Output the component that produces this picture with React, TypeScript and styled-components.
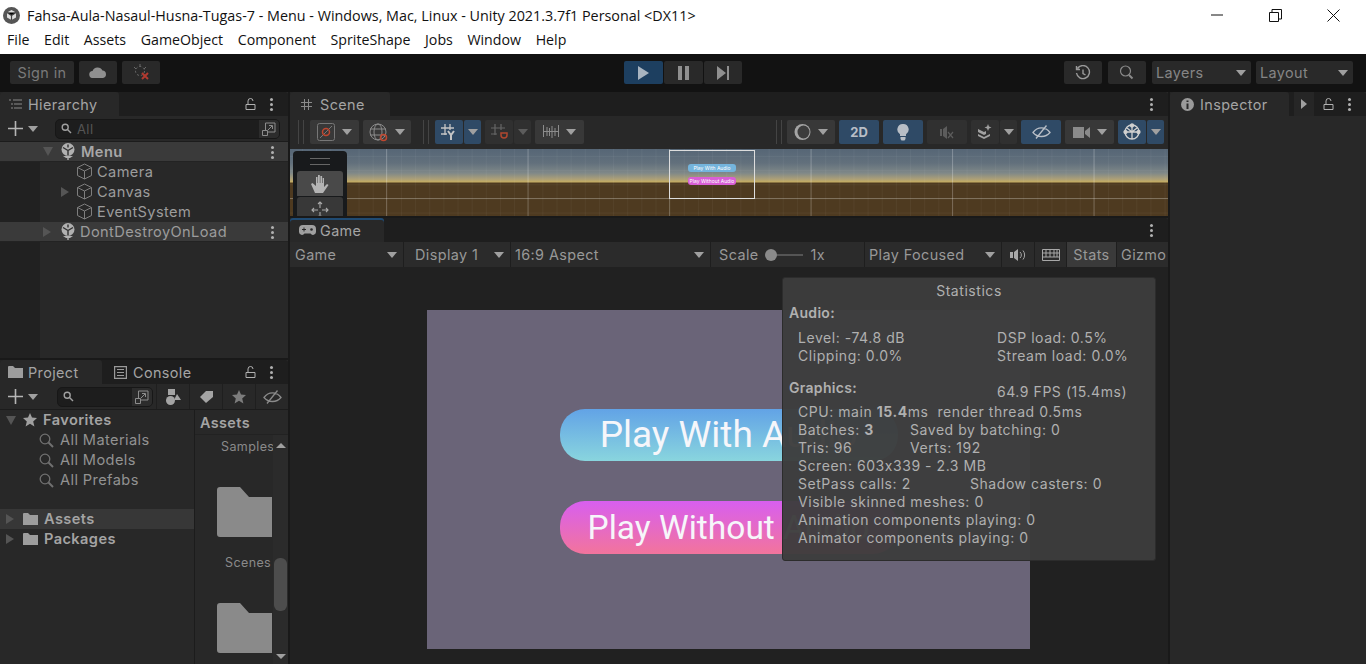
import React from "react";
import styled, { createGlobalStyle } from "styled-components";

const GlobalStyle = createGlobalStyle`
    html, body {
        margin: 0;
        padding: 0;
        background: #191919;
    }
    * {
        box-sizing: border-box;
    }
`;

const Page = styled.div`
    width: 1366px;
    height: 664px;
    overflow: hidden;
    display: flex;
    flex-direction: column;
    font-family: "Inter", "Liberation Sans", sans-serif;
    font-size: 14.4px;
    letter-spacing: 0.4px;
    color: #a4a4a4;
`;

/* window chrome */

const TitleBar = styled.div`
    height: 30px;
    background: #fff;
    display: flex;
    align-items: center;
    padding-left: 3px;
    color: #111;
    font-family: "Open Sans", "Liberation Sans", sans-serif;
    font-size: 14.35px;
    letter-spacing: 0;
`;

const TitleText = styled.span`
    margin-left: 7px;
    flex: 1;
`;

const WinButton = styled.div`
    width: 58px;
    height: 30px;
    display: flex;
    align-items: center;
    justify-content: center;
`;

const WinButtons = styled.div`
    display: flex;
    padding-right: 4px;
`;

const MenuBar = styled.div`
    height: 24px;
    background: #fff;
    display: flex;
    align-items: flex-start;
    gap: 14.6px;
    padding: 0 0 0 7px;
    color: #111;
    font-family: "Open Sans", "Liberation Sans", sans-serif;
    font-size: 14.2px;
    letter-spacing: 0;
`;

/* top toolbar */

const Toolbar = styled.div`
    height: 38px;
    background: #121212;
    padding: 7px 13px 7px 10px;
    display: flex;
`;

const ToolGroup = styled.div<{ $gap?: number; $left?: number }>`
    display: flex;
    gap: ${(p) => p.$gap ?? 0}px;
    margin-left: ${(p) => p.$left ?? 0}px;
`;

const ToolButton = styled.div<{ $w: number; $on?: boolean }>`
    width: ${(p) => p.$w}px;
    height: 23px;
    background: ${(p) => (p.$on ? "#1d3f60" : "#292929")};
    border-radius: 2px;
    display: flex;
    align-items: center;
    justify-content: center;
    color: #7a7a7a;
`;

const ToolDrop = styled(ToolButton)`
    justify-content: space-between;
    padding: 0 5px 0 4px;
    color: #858585;
`;

const Caret = styled.i<{ $dim?: boolean }>`
    display: block;
    width: 0;
    height: 0;
    flex: none;
    border-left: 5px solid transparent;
    border-right: 5px solid transparent;
    border-top: 6px solid ${(p) => (p.$dim ? "#5c5c5c" : "#a0a0a0")};
`;

/* docking layout */

const Dock = styled.div`
    flex: 1;
    display: grid;
    grid-template-columns: 288px 878px 196px;
    gap: 2px;
    background: #191919;
    min-height: 0;
`;

const Column = styled.div`
    display: flex;
    flex-direction: column;
    gap: 2px;
    min-height: 0;
`;

const Panel = styled.section<{ $h?: number }>`
    position: relative;
    background: #282828;
    display: flex;
    flex-direction: column;
    min-height: 0;
    flex: ${(p) => (p.$h ? `0 0 ${p.$h}px` : "1")};
`;

const TabStrip = styled.div`
    height: 24px;
    flex: none;
    background: #1e1e1e;
    display: flex;
    align-items: stretch;
    border-radius: 3px 3px 0 0;
`;

const Tab = styled.div<{ $w: number; $on?: boolean; $accent?: boolean; $pad?: number; $gap?: number }>`
    width: ${(p) => p.$w}px;
    background: ${(p) => (p.$on ? "#282828" : "transparent")};
    box-shadow: ${(p) => (p.$accent ? "inset 0 2px 0 #1f4a72" : "none")};
    border-radius: 3px 3px 0 0;
    display: flex;
    align-items: center;
    gap: ${(p) => p.$gap ?? 5}px;
    padding-left: ${(p) => p.$pad ?? 9}px;
`;

const TabActions = styled.div`
    margin-left: auto;
    display: flex;
    align-items: center;
    gap: 14px;
    padding-right: 15px;
`;

const Dots = styled.i`
    display: block;
    width: 3px;
    height: 3px;
    border-radius: 50%;
    background: #b0b0b0;
    box-shadow: 0 -5px 0 #b0b0b0, 0 5px 0 #b0b0b0;
`;

const DebugArrow = styled.div`
    width: 20px;
    height: 24px;
    margin-right: -5px;
    background: #262626;
    display: flex;
    align-items: center;
    justify-content: center;
    &::before {
        content: "";
        border-top: 5px solid transparent;
        border-bottom: 5px solid transparent;
        border-left: 6px solid #a0a0a0;
    }
`;

/* hierarchy */

const SearchBar = styled.div`
    height: 26px;
    flex: none;
    display: flex;
    align-items: center;
    padding-left: 8px;
    border-bottom: 1px solid #1c1c1c;
`;

const AddButton = styled.div`
    display: flex;
    align-items: center;
    gap: 5px;
`;

const SearchField = styled.div<{ $w: number; $left: number }>`
    width: ${(p) => p.$w}px;
    margin-left: ${(p) => p.$left}px;
    height: 20px;
    background: #1d1d1d;
    border: 1px solid #171717;
    border-radius: 5px;
    display: flex;
    align-items: center;
    padding-left: 5px;
    gap: 5px;
    color: #555;
    font-size: 13px;
    overflow: hidden;
`;

const SearchPop = styled.div`
    margin-left: auto;
    width: 20px;
    height: 100%;
    background: #2c2c2c;
    display: flex;
    align-items: center;
    justify-content: center;
`;

const TreeList = styled.div`
    flex: 1;
    background: linear-gradient(90deg, #212121 40px, #282828 40px);
`;

const TreeRow = styled.div<{ $arrowAt: number; $hi?: boolean; $bold?: boolean }>`
    height: 20px;
    display: flex;
    align-items: center;
    position: relative;
    padding-left: ${(p) => p.$arrowAt}px;
    padding-bottom: ${(p) => (p.$hi ? 0 : 1)}px;
    background: ${(p) => (p.$hi ? "#3a3a3a" : "transparent")};
    border-bottom: ${(p) => (p.$hi ? "1px solid #232323" : "none")};
    font-size: 14.6px;
    letter-spacing: 0.4px;
    font-weight: ${(p) => (p.$bold ? 600 : 400)};
    color: ${(p) => (p.$bold ? "#a8a8a8" : "#9c9c9c")};
`;

const Arrow = styled.span<{ $open?: boolean; $none?: boolean; $w?: number }>`
    width: ${(p) => p.$w ?? 17}px;
    flex: none;
    display: flex;
    &::before {
        content: "";
        display: ${(p) => (p.$none ? "none" : "block")};
        width: 0;
        height: 0;
        ${(p) =>
            p.$open
                ? "border-left: 5px solid transparent; border-right: 5px solid transparent; border-top: 9px solid #555;"
                : "border-top: 5px solid transparent; border-bottom: 5px solid transparent; border-left: 8px solid #555;"}
    }
`;

const RowLabel = styled.span<{ $left?: number }>`
    margin-left: ${(p) => p.$left ?? 4}px;
    white-space: nowrap;
`;

const RowMenu = styled.span`
    position: absolute;
    right: 14px;
    top: 9px;
`;

/* project */

const ProjectBar = styled.div`
    height: 26px;
    flex: none;
    display: flex;
    align-items: center;
    padding-left: 8px;
    border-bottom: 1px solid #1c1c1c;
    overflow: hidden;
`;

const FilterButton = styled.div<{ $left?: number }>`
    width: 33px;
    height: 26px;
    flex: none;
    margin-left: ${(p) => p.$left ?? 0}px;
    border-left: 1px solid #1f1f1f;
    display: flex;
    align-items: center;
    justify-content: center;
`;

const ProjectBody = styled.div`
    flex: 1;
    display: grid;
    grid-template-columns: 195px 1fr;
    min-height: 0;
`;

const ProjectTree = styled.div`
    border-right: 1px solid #1c1c1c;
`;

const ProjectRow = styled.div<{ $indent?: number; $hi?: boolean; $gapTop?: number; $bold?: boolean }>`
    height: 20px;
    display: flex;
    align-items: center;
    padding-left: ${(p) => p.$indent ?? 6}px;
    margin-top: ${(p) => p.$gapTop ?? 0}px;
    background: ${(p) => (p.$hi ? "#373737" : "transparent")};
    font-size: 14.6px;
    letter-spacing: 0.4px;
    font-weight: ${(p) => (p.$bold ? 600 : 400)};
    color: ${(p) => (p.$bold ? "#a4a4a4" : "#929292")};
    gap: 4px;
`;

const ProjectLabel = styled.span`
    margin-left: 2px;
`;

const AssetPane = styled.div`
    display: flex;
    flex-direction: column;
    min-height: 0;
    position: relative;
`;

const AssetHeader = styled.div`
    height: 25px;
    flex: none;
    font-weight: 600;
    padding-left: 5px;
    display: flex;
    align-items: center;
    border-bottom: 1px solid #222;
`;

const AssetGrid = styled.div`
    flex: 1;
    display: flex;
    overflow: hidden;
`;

const AssetList = styled.div`
    width: 78px;
    overflow: hidden;
    display: flex;
    flex-direction: column;
    flex: none;
`;

const AssetName = styled.div<{ $top: number; $pad: number }>`
    margin-top: ${(p) => p.$top}px;
    padding-left: ${(p) => p.$pad}px;
    height: 16px;
    line-height: 16px;
    font-size: 12.5px;
    white-space: nowrap;
    color: #8a8a8a;
`;

const AssetFolder = styled.svg<{ $top: number }>`
    margin: ${(p) => p.$top}px 0 0 22px;
    display: block;
    flex: none;
`;

const ScrollTrack = styled.div`
    width: 15px;
    background: #2b2b2b;
    display: flex;
    flex-direction: column;
    align-items: center;
    padding-top: 8px;
`;

const ScrollUp = styled.i`
    display: block;
    width: 0;
    height: 0;
    border-left: 5px solid transparent;
    border-right: 5px solid transparent;
    border-bottom: 5px solid #a0a0a0;
`;

const ScrollThumb = styled.i`
    display: block;
    width: 13px;
    height: 53px;
    margin-top: 110px;
    background: #4d4d4d;
    border-radius: 6px;
`;

const ScrollDown = styled.i`
    display: block;
    width: 0;
    height: 0;
    margin-top: 43px;
    border-left: 5px solid transparent;
    border-right: 5px solid transparent;
    border-top: 5px solid #a0a0a0;
`;

/* scene */

const SceneBar = styled.div`
    height: 33px;
    flex: none;
    display: flex;
    align-items: flex-start;
    padding-top: 4px;
    background: #282828;
`;

const SceneHandle = styled.i<{ $left: number }>`
    display: block;
    width: 6px;
    height: 24px;
    margin-left: ${(p) => p.$left}px;
    border-left: 1px solid #444;
    border-right: 1px solid #444;
    flex: none;
`;

const SceneButton = styled.div<{ $w: number; $left?: number; $on?: boolean; $dim?: boolean }>`
    width: ${(p) => p.$w}px;
    height: 24px;
    margin-left: ${(p) => p.$left ?? 0}px;
    flex: none;
    background: ${(p) => (p.$on ? "#2f4a66" : p.$dim ? "#303030" : "#383838")};
    border-radius: 2px;
    display: flex;
    align-items: center;
    justify-content: center;
    gap: 7px;
    color: #b8bec6;
    font-size: 13px;
    font-weight: 700;
    letter-spacing: 0;
`;

const SplitButton = styled.div<{ $left?: number }>`
    display: flex;
    gap: 1px;
    flex: none;
    margin-left: ${(p) => p.$left ?? 0}px;
`;

const SceneView = styled.div`
    flex: 1;
    position: relative;
    overflow: hidden;
    background-image:
        linear-gradient(90deg, rgba(255, 255, 255, 0.22) 1px, transparent 1px),
        linear-gradient(rgba(255, 255, 255, 0.26) 1px, transparent 1px),
        linear-gradient(90deg, rgba(255, 255, 255, 0.04) 1px, transparent 1px),
        linear-gradient(rgba(255, 255, 255, 0.04) 1px, transparent 1px),
        linear-gradient(
            #566676 0,
            #62707c 14px,
            #7f8888 24px,
            #ab9f78 30px,
            #c4ac62 33px,
            #4e3a20 34px,
            #4e3a20 100%
        );
    background-size: 141.5px 100%, 100% 141.5px, 14.15px 100%, 100% 14.15px, 100% 100%;
    background-position: 96px 0, 0 49px, 12px 0, 0 7px, 0 0;
`;

const ToolPalette = styled.div`
    position: absolute;
    left: 3px;
    top: 2px;
    width: 54px;
    height: 66px;
    background: #181a1c;
    border-radius: 4px 4px 0 0;
    display: flex;
    flex-direction: column;
    align-items: center;
    padding-top: 7px;
`;

const PaletteGrip = styled.i`
    display: block;
    width: 20px;
    height: 7px;
    border-top: 1px solid #666;
    border-bottom: 1px solid #666;
    margin-bottom: 6px;
    flex: none;
`;

const PaletteButton = styled.div<{ $on?: boolean }>`
    width: 46px;
    height: 25px;
    background: ${(p) => (p.$on ? "#494949" : "#383838")};
    border-radius: 3px 3px 0 0;
    margin-bottom: 1px;
    display: flex;
    align-items: center;
    justify-content: center;
    flex: none;
`;

const CanvasFrame = styled.div`
    position: absolute;
    left: 379px;
    top: 1px;
    width: 86px;
    height: 49px;
    border: 1px solid #ddd;
    display: flex;
    flex-direction: column;
    align-items: center;
    padding-top: 13px;
    gap: 5px;
`;

const MiniPlay = styled.div<{ $pink?: boolean }>`
    width: 48px;
    height: 8px;
    border-radius: 3px;
    background: ${(p) => (p.$pink ? "#d95fd6" : "#74b4dc")};
    color: #fff;
    font-size: 5px;
    line-height: 8px;
    letter-spacing: 0;
    text-align: center;
    white-space: nowrap;
`;

/* game */

const GameBar = styled.div`
    height: 25px;
    flex: none;
    display: flex;
    gap: 1px;
    background: #1e1e1e;
`;

const GameItem = styled.div<{ $w: number; $on?: boolean; $center?: boolean; $pad?: number }>`
    width: ${(p) => p.$w}px;
    flex: none;
    background: ${(p) => (p.$on ? "#3a3a3a" : "#2b2b2b")};
    display: flex;
    align-items: center;
    justify-content: ${(p) => (p.$center ? "center" : "space-between")};
    padding: ${(p) => (p.$center ? "0" : `0 6px 0 ${p.$pad ?? 4}px`)};
    white-space: nowrap;
    overflow: hidden;
    color: #989898;
`;

const ScaleTrack = styled.i`
    display: block;
    width: 36px;
    height: 2px;
    background: #555;
    position: relative;
    margin: 0 8px;
    &::before {
        content: "";
        position: absolute;
        left: -2px;
        top: -5px;
        width: 12px;
        height: 12px;
        border-radius: 50%;
        background: #8a8a8a;
    }
`;

const ScaleWrap = styled.div`
    display: flex;
    align-items: center;
    padding-left: 4px;
`;

const GameView = styled.div`
    flex: 1;
    position: relative;
    background: #212121;
    display: flex;
    justify-content: center;
    padding: 43px 1px 0 0;
`;

const GameCanvas = styled.div`
    width: 603px;
    height: 339px;
    background: #6a6478;
    display: flex;
    flex-direction: column;
    align-items: center;
    padding-top: 99px;
    gap: 40px;
`;

const PlayButton = styled.div<{ $pink?: boolean }>`
    width: 338px;
    height: ${(p) => (p.$pink ? 53 : 52)}px;
    border-radius: 25px;
    background: ${(p) =>
        p.$pink
            ? "linear-gradient(#d85ff0, #f2749c)"
            : "linear-gradient(#62a3e6, #89d5de)"};
    color: #f6f6fa;
    font-family: "Roboto", "Liberation Sans", sans-serif;
    font-size: ${(p) => (p.$pink ? 33.5 : 37)}px;
    letter-spacing: 0;
    display: flex;
    align-items: center;
    justify-content: center;
    white-space: nowrap;
    padding-bottom: ${(p) => (p.$pink ? 0 : 1)}px;
`;

const StatsPanel = styled.div`
    position: absolute;
    left: 492px;
    top: 10px;
    width: 374px;
    height: 284px;
    background: rgba(60, 60, 60, 0.96);
    border: 1px solid #2c2c2c;
    border-radius: 3px;
    padding: 4px 6px 0;
    color: #b0b0b0;
    font-size: 14px;
    letter-spacing: 0.55px;
    line-height: 18px;
    white-space: nowrap;
`;

const StatsTitle = styled.div`
    text-align: center;
    height: 18px;
    margin-bottom: 4px;
`;

const StatsHead = styled.div<{ $top?: number }>`
    font-weight: 600;
    letter-spacing: 0.3px;
    margin-top: ${(p) => p.$top ?? 0}px;
`;

const StatRows = styled.div<{ $top?: number }>`
    padding-left: 9px;
    margin-top: ${(p) => p.$top ?? 0}px;
`;

const StatRow = styled.div<{ $split?: number }>`
    display: grid;
    grid-template-columns: ${(p) => (p.$split ? `${p.$split}px 1fr` : "1fr")};
`;

const StatsGraphics = styled.div`
    display: grid;
    grid-template-columns: 208px 1fr;
    margin-top: 14px;
`;

const StatsFps = styled.span`
    padding-top: 4px;
`;

/* icons, drawn to match the editor glyphs */

const LockIcon = () => (
    <svg width="11" height="12" viewBox="0 0 11 12" fill="none" stroke="#b0b0b0">
        <path d="M1 6.5h9v5H1zM3 6.5V3a2.5 2.5 0 0 1 5 0" />
    </svg>
);

const UnityIcon = () => (
    <svg width="16" height="17" viewBox="0 0 16 17" fill="none">
        <circle cx="8" cy="6.5" r="6.5" fill="#b0b0b0" />
        <path d="M8 1.5v3M3 4.5l5 3 5-3M8 7.5v5" stroke="#303030" strokeWidth="1.4" />
        <path d="M3 13h10l-3 2H6z" fill="#b0b0b0" />
        <path d="M8 14v3" stroke="#b0b0b0" strokeWidth="1.4" />
    </svg>
);

const CubeIcon = () => (
    <svg width="17" height="17" viewBox="0 0 17 17" fill="none" stroke="#7e7e7e">
        <path d="M8.5 1 15.5 4.5v8L8.5 16 1.5 12.5v-8zM1.5 4.5l7 3.5 7-3.5M8.5 8v8" />
    </svg>
);

const PlusIcon = () => (
    <svg width="15" height="15" viewBox="0 0 15 15" stroke="#b5b5b5" strokeWidth="1.6">
        <path d="M7.5 0v15M0 7.5h15" />
    </svg>
);

const SmallSearch = () => (
    <svg width="11" height="11" viewBox="0 0 11 11" fill="none" stroke="#a0a0a0" strokeWidth="1.4">
        <circle cx="4.2" cy="4.2" r="3" />
        <path d="M6.5 6.5 10 10" />
    </svg>
);

const LoupeIcon = () => (
    <svg width="15" height="15" viewBox="0 0 15 15" fill="none" stroke="#707070" strokeWidth="1.3">
        <circle cx="6" cy="6" r="4.8" />
        <path d="M9.5 9.5 14 14" strokeWidth="2" />
    </svg>
);

const PopIcon = () => (
    <svg width="14" height="14" viewBox="0 0 14 14" fill="none" stroke="#8c8c8c">
        <path d="M3.5 8V1h9.5v9H6M.5 8.5h5v5h-5zM6 8l4-4M7 3.5h3.5V7" />
    </svg>
);

const FolderIcon = () => (
    <svg width="15" height="12" viewBox="0 0 15 12" fill="#9d9d9d">
        <path d="M0 1a1 1 0 0 1 1-1h4l2 2h8v10H0z" />
    </svg>
);

const BigFolder = ({ top }: { top: number }) => (
    <AssetFolder $top={top} width="55" height="50" viewBox="0 0 55 50" fill="#8a8a8a">
        <path d="M3 0h20l9 10h23v40H3a3 3 0 0 1-3-3V3a3 3 0 0 1 3-3z" />
    </AssetFolder>
);

const StarIcon = ({ color = "#a0a0a0" }: { color?: string }) => (
    <svg width="14" height="14" viewBox="0 0 14 14" fill={color}>
        <path d="M7 0l2 4.6 5 .5-3.8 3.3 1.2 5L7 10.8 2.6 13.4l1.2-5L0 5.1l5-.5z" />
    </svg>
);

const EyeOff = ({ color = "#8a8a8a" }: { color?: string }) => (
    <svg width="19" height="14" viewBox="0 0 19 14" fill="none" stroke={color} strokeWidth="1.3">
        <path d="M1 7.5C3.5 4 6 2.8 9.5 2.8S15.5 4 18 7.5c-2.5 3-5 4-8.5 4S3.5 10.5 1 7.5zM14.5 .5 4 13.5" />
    </svg>
);

const MENU_ITEMS = ["File", "Edit", "Assets", "GameObject", "Component", "SpriteShape", "Jobs", "Window", "Help"];

const App: React.FC = () => {
    return (
        <>
            <GlobalStyle />
            <Page>
                <TitleBar>
                    <svg width="17" height="17" viewBox="0 0 17 17">
                        <circle cx="8.5" cy="8.5" r="8.5" fill="#555" />
                        <path d="M8.5 3 13 5.5v5L8.5 13 4 10.5v-5z" fill="#ddd" />
                        <path d="M8.5 8.5V13M4 5.5l4.5 3 4.5-3" stroke="#444" strokeWidth="1.2" />
                    </svg>
                    <TitleText>Fahsa-Aula-Nasaul-Husna-Tugas-7 - Menu - Windows, Mac, Linux - Unity 2021.3.7f1 Personal &lt;DX11&gt;</TitleText>
                    <WinButtons>
                        <WinButton>
                            <svg width="12" height="2"><path d="M0 1h12" stroke="#111" /></svg>
                        </WinButton>
                        <WinButton>
                            <svg width="13" height="13" fill="none" stroke="#111">
                                <path d="M.5 3.5h9v9h-9zM3 3.5V.5h9.5V10H9.5" />
                            </svg>
                        </WinButton>
                        <WinButton>
                            <svg width="13" height="13" stroke="#111"><path d="M.5 .5l12 12M12.5 .5l-12 12" /></svg>
                        </WinButton>
                    </WinButtons>
                </TitleBar>
                <MenuBar>
                    {MENU_ITEMS.map((item) => (
                        <span key={item}>{item}</span>
                    ))}
                </MenuBar>

                <Toolbar>
                    <ToolGroup $gap={5}>
                        <ToolButton $w={64}>Sign in</ToolButton>
                        <ToolButton $w={38}>
                            <svg width="18" height="11" viewBox="0 0 18 11" fill="#8f8f8f">
                                <path d="M4 11a3.5 3.5 0 0 1-.5-7A5.5 5.5 0 0 1 13.5 3.5 3.8 3.8 0 0 1 14 11z" />
                            </svg>
                        </ToolButton>
                        <ToolButton $w={38}>
                            <svg width="17" height="17" viewBox="0 0 17 17" fill="none">
                                <circle cx="7" cy="7" r="4.5" stroke="#6a6a6a" strokeDasharray="2 2" />
                                <path d="M7 0v3M1 3l2 2M13 3l-2 2" stroke="#6a6a6a" />
                                <path d="M9 9l6 6M15 9l-6 6" stroke="#b03a30" strokeWidth="2" />
                            </svg>
                        </ToolButton>
                    </ToolGroup>
                    <ToolGroup $gap={1} $left={464}>
                        <ToolButton $w={39} $on>
                            <svg width="11" height="14" viewBox="0 0 11 14" fill="#a8b4c0">
                                <path d="M0 0l11 7-11 7z" />
                            </svg>
                        </ToolButton>
                        <ToolButton $w={39}>
                            <svg width="11" height="14" fill="#8f8f8f"><path d="M0 0h4v14H0zM7 0h4v14H7z" /></svg>
                        </ToolButton>
                        <ToolButton $w={38}>
                            <svg width="12" height="14" fill="#8f8f8f"><path d="M0 0l9 7-9 7zM10 0h2v14h-2z" /></svg>
                        </ToolButton>
                    </ToolGroup>
                    <ToolGroup $gap={6} $left={322}>
                        <ToolButton $w={38}>
                            <svg width="16" height="16" viewBox="0 0 16 16" fill="none" stroke="#9a9a9a" strokeWidth="1.4">
                                <path d="M2.5 3.5A6.5 6.5 0 1 1 1.5 8M1.5 1v3.5H5M8 4.5V8.5l2.5 1.5" />
                            </svg>
                        </ToolButton>
                        <ToolButton $w={38}>
                            <svg width="16" height="16" viewBox="0 0 16 16" fill="none" stroke="#8a8a8a" strokeWidth="1.2">
                                <circle cx="6.5" cy="6" r="5" />
                                <path d="M10 10l3.5 3.5" strokeWidth="2" />
                            </svg>
                        </ToolButton>
                    </ToolGroup>
                    <ToolGroup $gap={5} $left={6}>
                        <ToolDrop $w={99}>Layers<Caret /></ToolDrop>
                        <ToolDrop $w={97}>Layout<Caret /></ToolDrop>
                    </ToolGroup>
                </Toolbar>

                <Dock>
                    <Column>
                        <Panel $h={266}>
                            <TabStrip>
                                <Tab $w={119} $on $gap={6}>
                                    <svg width="13" height="10" stroke="#8a8a8a" fill="none">
                                        <path d="M0 1h2M4 1h9M2 5h2M5 5h8M2 9h2M5 9h8" />
                                    </svg>
                                    Hierarchy
                                </Tab>
                                <TabActions>
                                    <LockIcon />
                                    <Dots />
                                </TabActions>
                            </TabStrip>
                            <SearchBar>
                                <AddButton><PlusIcon /><Caret /></AddButton>
                                <SearchField $w={225} $left={17}>
                                    <SmallSearch />
                                    All
                                    <SearchPop><PopIcon /></SearchPop>
                                </SearchField>
                            </SearchBar>
                            <TreeList>
                                <TreeRow $arrowAt={43} $hi $bold>
                                    <Arrow $open />
                                    <UnityIcon />
                                    <RowLabel $left={5}>Menu</RowLabel>
                                    <RowMenu><Dots /></RowMenu>
                                </TreeRow>
                                <TreeRow $arrowAt={59}>
                                    <Arrow $none /><CubeIcon /><RowLabel>Camera</RowLabel>
                                </TreeRow>
                                <TreeRow $arrowAt={61}>
                                    <Arrow $w={15} /><CubeIcon /><RowLabel>Canvas</RowLabel>
                                </TreeRow>
                                <TreeRow $arrowAt={59}>
                                    <Arrow $none /><CubeIcon /><RowLabel>EventSystem</RowLabel>
                                </TreeRow>
                                <TreeRow $arrowAt={43} $hi>
                                    <Arrow />
                                    <UnityIcon />
                                    <RowLabel>DontDestroyOnLoad</RowLabel>
                                    <RowMenu><Dots /></RowMenu>
                                </TreeRow>
                            </TreeList>
                        </Panel>
                        <Panel>
                            <TabStrip>
                                <Tab $w={102} $on $pad={8}>
                                    <FolderIcon />
                                    Project
                                </Tab>
                                <Tab $w={100} $pad={12} $gap={6}>
                                    <svg width="13" height="13" viewBox="0 0 13 13" fill="none" stroke="#9a9a9a" strokeWidth="1.2">
                                        <path d="M.6 .6h11.8v11.8H.6zM3 3.5h7M3 6.5h7M3 9.5h7" />
                                    </svg>
                                    Console
                                </Tab>
                                <TabActions>
                                    <LockIcon />
                                    <Dots />
                                </TabActions>
                            </TabStrip>
                            <ProjectBar>
                                <AddButton><PlusIcon /><Caret /></AddButton>
                                <SearchField $w={102} $left={19}>
                                    <SmallSearch />
                                    <SearchPop><PopIcon /></SearchPop>
                                </SearchField>
                                <FilterButton $left={3}>
                                    <svg width="15" height="16" viewBox="0 0 15 16" fill="#a4a4a4">
                                        <path d="M2 0h7v6H2z" /><circle cx="4.5" cy="11.5" r="4.5" /><path d="M11 5l4 6H8z" />
                                    </svg>
                                </FilterButton>
                                <FilterButton>
                                    <svg width="14" height="12" viewBox="0 0 14 12" fill="#a4a4a4">
                                        <path d="M7 0h7v6l-7 6-6-6z" />
                                    </svg>
                                </FilterButton>
                                <FilterButton><StarIcon color="#7c7c7c" /></FilterButton>
                                <FilterButton><EyeOff /></FilterButton>
                            </ProjectBar>
                            <ProjectBody>
                                <ProjectTree>
                                    <ProjectRow $bold>
                                        <Arrow $open $w={13} />
                                        <StarIcon />
                                        <ProjectLabel>Favorites</ProjectLabel>
                                    </ProjectRow>
                                    <ProjectRow $indent={39}><LoupeIcon /><ProjectLabel>All Materials</ProjectLabel></ProjectRow>
                                    <ProjectRow $indent={39}><LoupeIcon /><ProjectLabel>All Models</ProjectLabel></ProjectRow>
                                    <ProjectRow $indent={39}><LoupeIcon /><ProjectLabel>All Prefabs</ProjectLabel></ProjectRow>
                                    <ProjectRow $bold $hi $gapTop={19}>
                                        <Arrow $w={13} /><FolderIcon /><ProjectLabel>Assets</ProjectLabel>
                                    </ProjectRow>
                                    <ProjectRow $bold>
                                        <Arrow $w={13} /><FolderIcon /><ProjectLabel>Packages</ProjectLabel>
                                    </ProjectRow>
                                </ProjectTree>
                                <AssetPane>
                                    <AssetHeader>Assets</AssetHeader>
                                    <AssetGrid>
                                        <AssetList>
                                            <AssetName $top={4} $pad={26}>Samples</AssetName>
                                            <BigFolder top={32} />
                                            <AssetName $top={18} $pad={30}>Scenes</AssetName>
                                            <BigFolder top={32} />
                                        </AssetList>
                                        <ScrollTrack>
                                            <ScrollUp />
                                            <ScrollThumb />
                                            <ScrollDown />
                                        </ScrollTrack>
                                    </AssetGrid>
                                </AssetPane>
                            </ProjectBody>
                        </Panel>
                    </Column>

                    <Column>
                        <Panel $h={124}>
                            <TabStrip>
                                <Tab $w={100} $on $pad={11} $gap={8}>
                                    <svg width="11" height="11" stroke="#8a8a8a" fill="none">
                                        <path d="M3.5 0v11M7.5 0v11M0 3.5h11M0 7.5h11" />
                                    </svg>
                                    Scene
                                </Tab>
                                <TabActions><Dots /></TabActions>
                            </TabStrip>
                            <SceneBar>
                                <SceneHandle $left={8} />
                                <SplitButton $left={6}>
                                    <SceneButton $w={49}>
                                        <svg width="18" height="18" viewBox="0 0 18 18" fill="none">
                                            <rect x=".5" y=".5" width="17" height="17" rx="2" stroke="#777" />
                                            <path d="M3 15 15 3" stroke="#777" />
                                            <circle cx="9" cy="9" r="3.5" stroke="#c0472f" strokeWidth="1.5" />
                                        </svg>
                                        <Caret />
                                    </SceneButton>
                                </SplitButton>
                                <SceneButton $w={48} $left={4}>
                                    <svg width="19" height="19" viewBox="0 0 19 19" fill="none" stroke="#8c8c8c">
                                        <circle cx="9" cy="9" r="8" />
                                        <ellipse cx="9" cy="9" rx="4" ry="8" />
                                        <path d="M1 6h16M1 12h16" />
                                        <circle cx="14.5" cy="14.5" r="3" stroke="#c0472f" strokeWidth="1.5" />
                                    </svg>
                                    <Caret />
                                </SceneButton>
                                <SceneHandle $left={12} />
                                <SplitButton $left={6}>
                                    <SceneButton $w={28} $on>
                                        <svg width="17" height="17" viewBox="0 0 17 17" fill="none" stroke="#c4c4c4" strokeWidth="1.3">
                                            <path d="M4 0v11M9 0v6M0 4h13M0 10h6" />
                                            <path d="M7 7l3 4 3-4M10 11v5" strokeWidth="2" />
                                        </svg>
                                    </SceneButton>
                                    <SceneButton $w={17} $on><Caret /></SceneButton>
                                </SplitButton>
                                <SplitButton $left={4}>
                                    <SceneButton $w={28} $dim>
                                        <svg width="17" height="17" viewBox="0 0 17 17" fill="none" stroke="#666" strokeWidth="1.2">
                                            <path d="M4 0v11M10 0v6M0 4h14M0 10h6" />
                                            <path d="M10 9h6v2a3 3 0 0 1-6 0z" stroke="#b0472f" strokeWidth="1.5" />
                                        </svg>
                                    </SceneButton>
                                    <SceneButton $w={17} $dim><Caret $dim /></SceneButton>
                                </SplitButton>
                                <SceneButton $w={49} $left={4}>
                                    <svg width="16" height="14" viewBox="0 0 16 14" stroke="#8c8c8c">
                                        <path d="M.5 0v12M15.5 0v12M0 6.5h16M4 2v9M6.5 3v8M9 1v12M12 3v8" />
                                    </svg>
                                    <Caret />
                                </SceneButton>
                                <SceneHandle $left={192} />
                                <SceneButton $w={48} $left={5}>
                                    <svg width="17" height="18" viewBox="0 0 17 18">
                                        <circle cx="8.5" cy="9" r="8" fill="#a4a4a4" />
                                        <ellipse cx="9.5" cy="9" rx="6" ry="6.5" fill="#3c3c3c" />
                                    </svg>
                                    <Caret />
                                </SceneButton>
                                <SceneButton $w={40} $left={4} $on>2D</SceneButton>
                                <SceneButton $w={40} $left={4} $on>
                                    <svg width="12" height="17" viewBox="0 0 12 17" fill="#b8bec6">
                                        <path d="M6 0a5.5 5.5 0 0 1 3 10.2V12H3v-1.800A5.500 5.500 0 0 1 6 0zM3.500 13h5v2l-1 1.500h-3l-1-1.500z" />
                                    </svg>
                                </SceneButton>
                                <SceneButton $w={40} $left={4} $dim>
                                    <svg width="14" height="13" viewBox="0 0 14 13" fill="#5c5c5c">
                                        <path d="M0 3h2v7H0zM3 3l4-3v13L3 10z" />
                                        <path d="M8 6l5 6M13 6l-5 6" stroke="#5c5c5c" strokeWidth="1.2" />
                                    </svg>
                                </SceneButton>
                                <SplitButton $left={4}>
                                    <SceneButton $w={28} $dim>
                                        <svg width="16" height="16" viewBox="0 0 16 16" fill="#a0a0a0">
                                            <path d="M1 5l6 3 2-1v3l-2 1-6-3zM1 10l6 3 6-3v2l-6 3-6-3zM11 0l1 2.500 2.500 1-2.500 1-1 2.500-1-2.500-2.500-1 2.500-1z" />
                                        </svg>
                                    </SceneButton>
                                    <SceneButton $w={17} $dim><Caret /></SceneButton>
                                </SplitButton>
                                <SceneButton $w={40} $left={4} $on><EyeOff color="#b8bec6" /></SceneButton>
                                <SceneButton $w={49} $left={4}>
                                    <svg width="17" height="11" viewBox="0 0 17 11" fill="#8a8a8a">
                                        <path d="M0 0h11v11H0zM12 4l5-4v11l-5-4z" />
                                    </svg>
                                    <Caret />
                                </SceneButton>
                                <SplitButton $left={4}>
                                    <SceneButton $w={28} $on>
                                        <svg width="18" height="18" viewBox="0 0 18 18" fill="none" stroke="#d0d0d0" strokeWidth="1.3">
                                            <circle cx="9" cy="9" r="7" />
                                            <path d="M9 2v14M2 9h14M4 5l5 4 5-4" />
                                            <circle cx="9" cy="2.5" r="1.5" fill="#d0d0d0" />
                                            <circle cx="2.5" cy="9" r="1.5" fill="#d0d0d0" />
                                            <circle cx="15.5" cy="9" r="1.5" fill="#d0d0d0" />
                                        </svg>
                                    </SceneButton>
                                    <SceneButton $w={17} $on><Caret /></SceneButton>
                                </SplitButton>
                            </SceneBar>
                            <SceneView>
                                <ToolPalette>
                                    <PaletteGrip />
                                    <PaletteButton $on>
                                        <svg width="18" height="20" viewBox="0 0 18 20" fill="#b4b4b4">
                                            <path d="M4 19 0 10l1.500-1L5 12V3h1.500v6H7V1h1.800v8h.6V2h1.700v7h.6V4H13v9l3-3 1.500 1L12 19z" />
                                        </svg>
                                    </PaletteButton>
                                    <PaletteButton>
                                        <svg width="18" height="18" viewBox="0 0 18 18" fill="none" stroke="#aaa" strokeWidth="1.1">
                                            <path d="M9 1v6M9 11v6M1 9h6M11 9h6M7 3l2-2 2 2M3 7 1 9l2 2M15 7l2 2-2 2M7 15l2 2 2-2" />
                                        </svg>
                                    </PaletteButton>
                                </ToolPalette>
                                <CanvasFrame>
                                    <MiniPlay>Play With Audio</MiniPlay>
                                    <MiniPlay $pink>Play Without Audio</MiniPlay>
                                </CanvasFrame>
                            </SceneView>
                        </Panel>
                        <Panel>
                            <TabStrip>
                                <Tab $w={94} $on $accent $gap={4}>
                                    <svg width="17" height="11" viewBox="0 0 17 11" fill="#a0a0a0">
                                        <path d="M4 0h9a4 4 0 0 1 4 4v3a3 3 0 0 1-5.500 1.500H5.500A3 3 0 0 1 0 7V4a4 4 0 0 1 4-4z" />
                                        <path d="M3 4.500h4M5 2.500v4" stroke="#282828" />
                                        <circle cx="12.5" cy="4.5" r="1.3" fill="#282828" />
                                    </svg>
                                    Game
                                </Tab>
                                <TabActions><Dots /></TabActions>
                            </TabStrip>
                            <GameBar>
                                <GameItem $w={113} $pad={5}>Game<Caret /></GameItem>
                                <GameItem $w={106} $pad={11}>Display 1<Caret /></GameItem>
                                <GameItem $w={199}>16:9 Aspect<Caret /></GameItem>
                                <GameItem $w={153}>
                                    <ScaleWrap>Scale<ScaleTrack />1x</ScaleWrap>
                                </GameItem>
                                <GameItem $w={136}>Play Focused<Caret /></GameItem>
                                <GameItem $w={32} $center>
                                    <svg width="16" height="12" viewBox="0 0 16 12" fill="#a8a8a8">
                                        <path d="M0 3h3v6H0zM4 3l4-3v12L4 9z" />
                                        <path d="M10 3a4 4 0 0 1 0 6M13 1.500a7 7 0 0 1 0 9" stroke="#a8a8a8" fill="none" />
                                    </svg>
                                </GameItem>
                                <GameItem $w={31} $center>
                                    <svg width="18" height="12" viewBox="0 0 18 12" fill="none" stroke="#a8a8a8">
                                        <path d="M.5 .5h17v11H.5zM.5 4h17M.5 8h17M4 .5V8M8 .5V8M12 .5V8M15 .5V8" />
                                    </svg>
                                </GameItem>
                                <GameItem $w={49} $on $center>Stats</GameItem>
                                <GameItem $w={51}>Gizmo</GameItem>
                            </GameBar>
                            <GameView>
                                <GameCanvas>
                                    <PlayButton>Play With Audio</PlayButton>
                                    <PlayButton $pink>Play Without Audio</PlayButton>
                                </GameCanvas>
                                <StatsPanel>
                                    <StatsTitle>Statistics</StatsTitle>
                                    <StatsHead>Audio:</StatsHead>
                                    <StatRows $top={7}>
                                        <StatRow $split={199}><span>Level: -74.8 dB</span><span>DSP load: 0.5%</span></StatRow>
                                        <StatRow $split={199}><span>Clipping: 0.0%</span><span>Stream load: 0.0%</span></StatRow>
                                    </StatRows>
                                    <StatsGraphics>
                                        <StatsHead>Graphics:</StatsHead>
                                        <StatsFps>64.9 FPS (15.4ms)</StatsFps>
                                    </StatsGraphics>
                                    <StatRows $top={2}>
                                        <StatRow>
                                            <span>CPU: main <b>15.4</b>ms&nbsp; render thread 0.5ms</span>
                                        </StatRow>
                                        <StatRow $split={112}><span>Batches: <b>3</b></span><span>Saved by batching: 0</span></StatRow>
                                        <StatRow $split={112}><span>Tris: 96</span><span>Verts: 192</span></StatRow>
                                        <StatRow>Screen: 603x339 - 2.3 MB</StatRow>
                                        <StatRow $split={172}><span>SetPass calls: 2</span><span>Shadow casters: 0</span></StatRow>
                                        <StatRow>Visible skinned meshes: 0</StatRow>
                                        <StatRow>Animation components playing: 0</StatRow>
                                        <StatRow>Animator components playing: 0</StatRow>
                                    </StatRows>
                                </StatsPanel>
                            </GameView>
                        </Panel>
                    </Column>

                    <Column>
                        <Panel>
                            <TabStrip>
                                <Tab $w={119} $on $pad={11} $gap={6}>
                                    <svg width="13" height="13" viewBox="0 0 13 13">
                                        <circle cx="6.5" cy="6.5" r="6.5" fill="#9a9a9a" />
                                        <path d="M6.5 2.5v1.5M6.5 5.5V11" stroke="#282828" strokeWidth="2" />
                                    </svg>
                                    Inspector
                                </Tab>
                                <TabActions>
                                    <DebugArrow />
                                    <LockIcon />
                                    <Dots />
                                </TabActions>
                            </TabStrip>
                        </Panel>
                    </Column>
                </Dock>
            </Page>
        </>
    );
};

export default App;
